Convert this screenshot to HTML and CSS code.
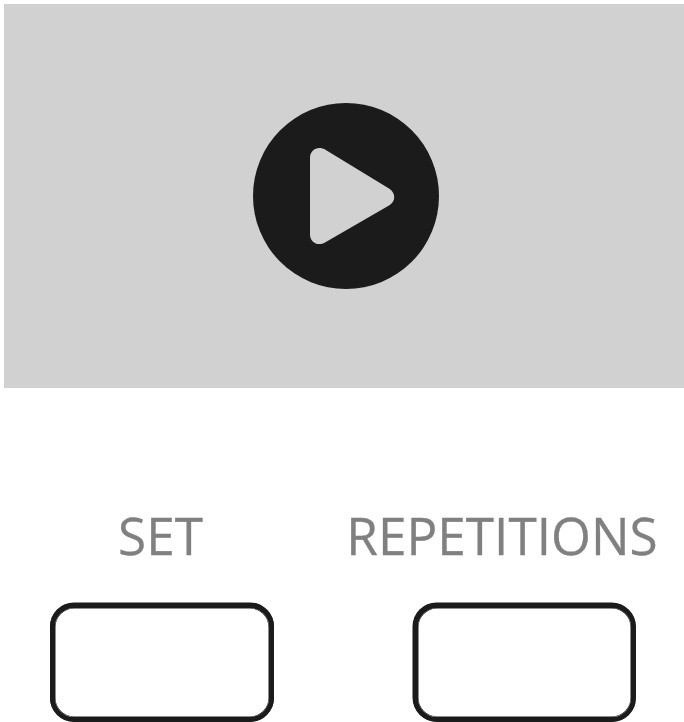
FILE: index.html
```html
<!DOCTYPE html>
<html lang="en">
<head>
<meta charset="utf-8">
<title>Exercise</title>
<link rel="stylesheet" href="styles.css">
</head>
<body>
<main class="screen">
  <section class="video">
    <svg class="play" viewBox="0 0 186 186" role="img" aria-label="Play">
      <circle class="play-disc" cx="93" cy="93" r="93"/>
      <path class="play-arrow" d="M57 55C57 46.500 65 42.500 72 46.500L136 85.500C143 90 143 98.500 136 102.500L72 139.500C65 143.500 57 139.500 57 131.500Z"/>
    </svg>
  </section>
  <section class="fields">
    <label class="field field-set"><span class="label">SET</span><input class="box" type="text"></label>
    <label class="field field-reps"><span class="label">REPETITIONS</span><input class="box" type="text"></label>
  </section>
</main>
</body>
</html>
```
FILE: styles.css
```css
* { box-sizing: border-box; }
body { margin: 0; background: #fff; font-family: "Open Sans", sans-serif; overflow: hidden; }
.screen { width: 684px; height: 722px; padding: 4px 0 0 4px; overflow: hidden; }
.video { height: 384px; padding: 99px 0 0 249px; background: #d1d1d1; }
.play { display: block; width: 186px; height: 186px; }
.play-disc { fill: #1b1b1b; }
.play-arrow { fill: #d1d1d1; }
.fields { display: flex; padding: 112px 0 0 46px; gap: 72px; }
.field { display: flex; flex-direction: column; align-items: center; }
.field-set { width: 224px; }
.field-set .label { padding-right: 3px; }
.field-reps { width: 312px; }
.field-reps .box { width: 223px; margin-left: 45px; box-shadow: -0.5px -0.5px 0 #1b1b1b, inset 0 0 0 0.5px #1b1b1b; }
.label { height: 103px; font-size: 51.3px; line-height: 70px; color: #808080; -webkit-text-stroke: 0.3px #808080; white-space: nowrap; }
.box { width: 224px; height: 119px; padding: 0 24px; border: 5px solid #1b1b1b; border-radius: 24px; background: #fff; font: inherit; font-size: 40px; box-shadow: 0 -0.5px 0 #1b1b1b, inset 0 0 0 0.5px #1b1b1b; }
```
